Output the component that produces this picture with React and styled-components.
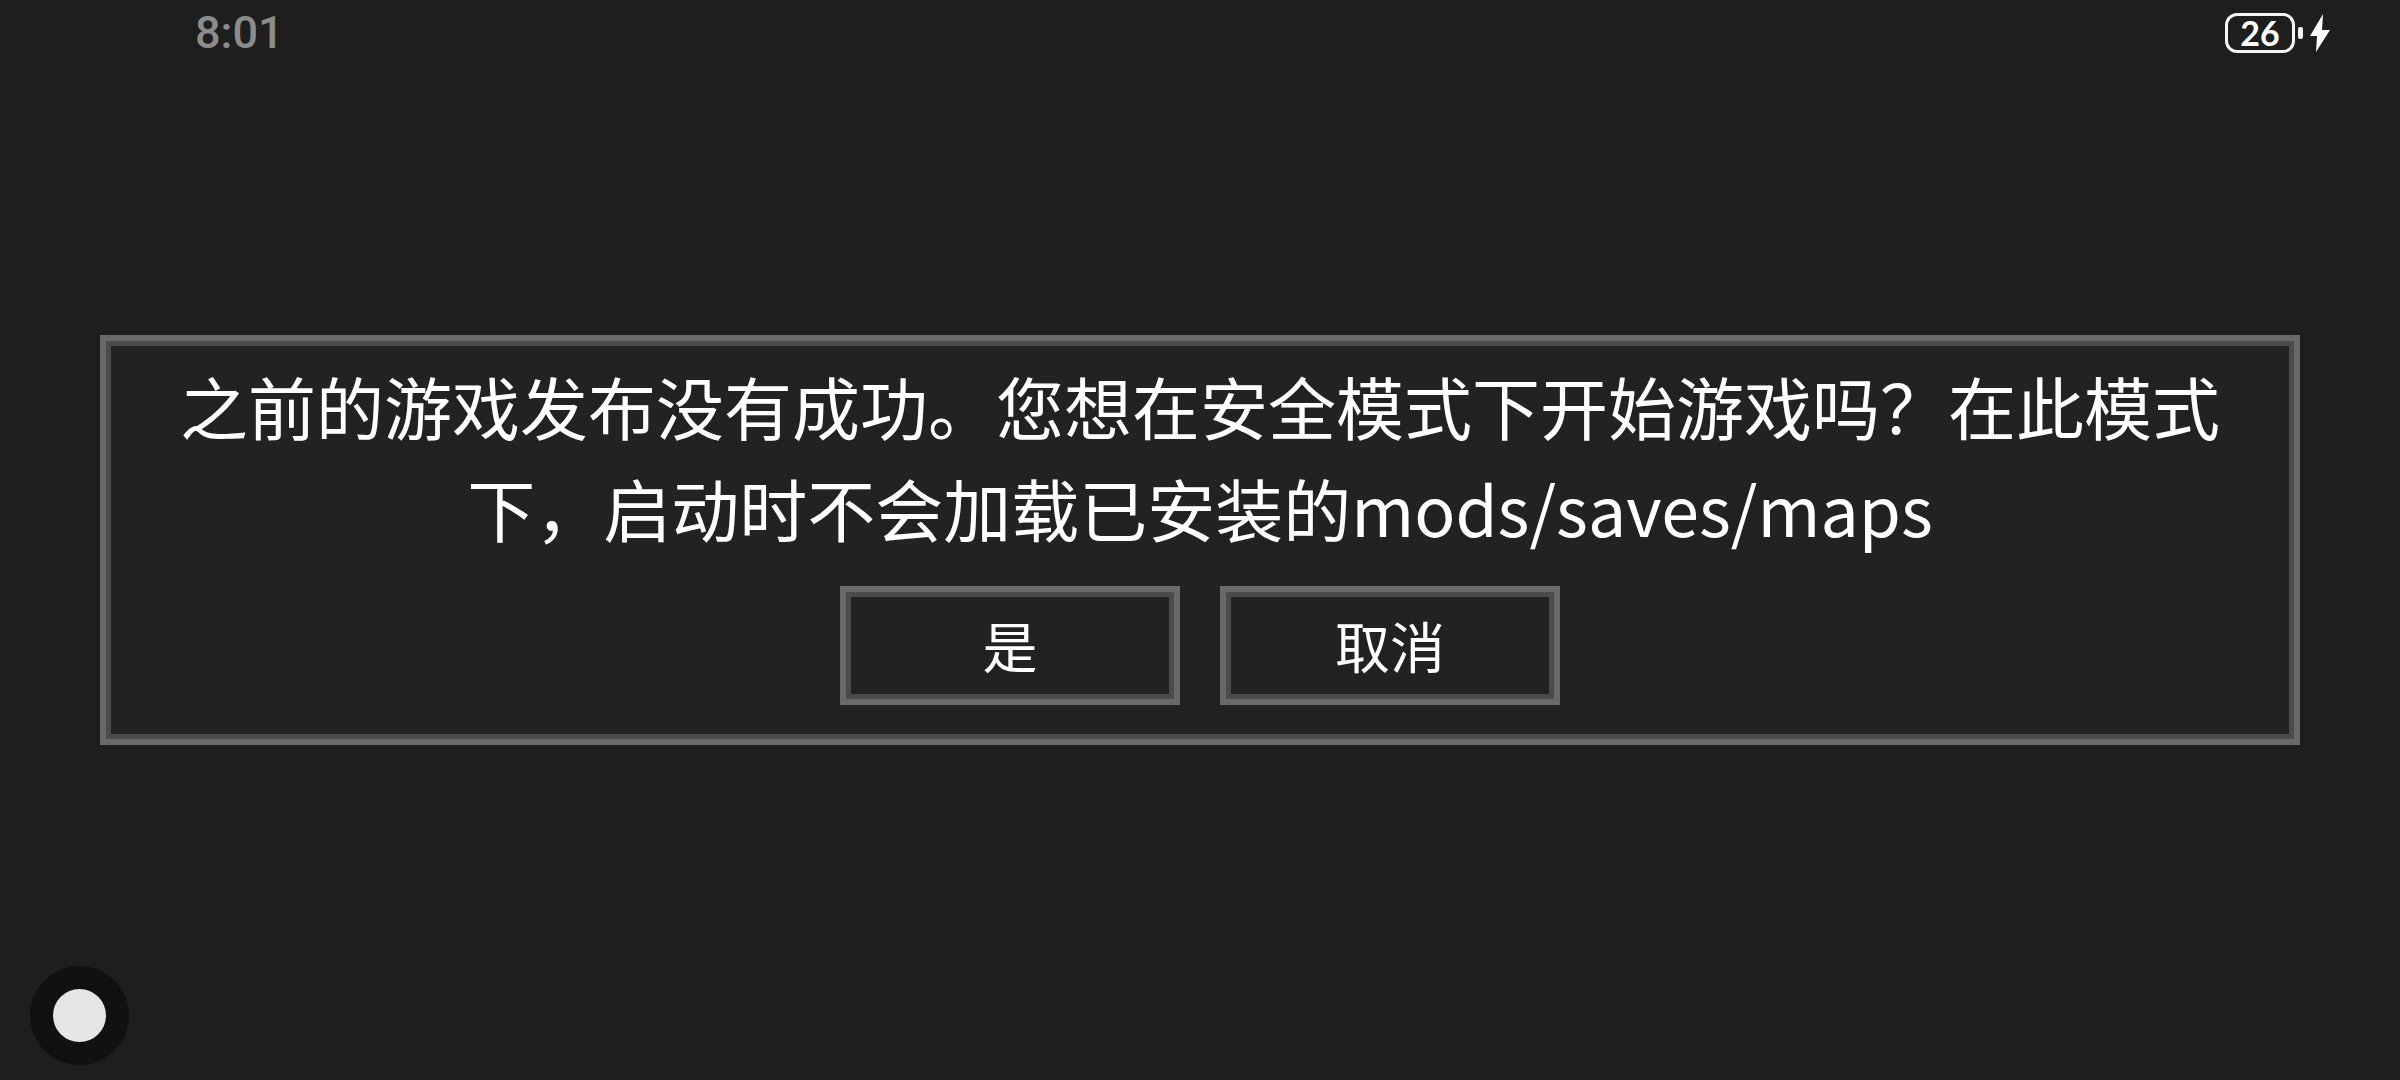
import React from "react";
import styled, { createGlobalStyle } from "styled-components";

const GlobalStyle = createGlobalStyle`
  * { box-sizing: border-box; }
  body {
    margin: 0;
    background: #1e1e1e;
    color: #fff;
    font-family: "Noto Sans CJK SC", sans-serif;
  }
`;

const Screen = styled.div`
  display: grid;
  grid-template-rows: 1fr auto 1fr;
  min-height: 100vh;
`;

const StatusBar = styled.header`
  display: flex;
  align-items: center;
  justify-content: space-between;
  align-self: start;
  height: 66px;
  padding: 0 70px 0 195px;
`;

const Clock = styled.time`
  color: #8c8c8c;
  font: 500 45px/66px Roboto, sans-serif;
`;

const Power = styled.div`
  display: flex;
  align-items: center;
  gap: 3px;
`;

const BatteryLevel = styled.span`
  display: flex;
  align-items: center;
  justify-content: center;
  width: 70px;
  height: 40px;
  border: 3px solid #f4f4f4;
  border-radius: 12px;
  font: 700 34px/34px Lato, sans-serif;
`;

const BatteryTip = styled.span`
  width: 5px;
  height: 12px;
  border-radius: 2px;
  background: #f4f4f4;
`;

const Bolt = styled.svg`
  width: 20px;
  height: 38px;
  margin-left: 4px;
  fill: #fff;
`;

const Frame = `
  border: 6px solid #696969;
  outline: 5px solid #4b4b4b;
  outline-offset: -11px;
  background: #222;
`;

const Dialog = styled.main`
  ${Frame}
  margin: 0 100px;
  padding: 14px 64px 34px;
`;

const Message = styled.p`
  margin: 0 0 27px;
  font-size: 68px;
  line-height: 102px;
  text-align: center;
`;

const Actions = styled.div`
  display: flex;
  justify-content: center;
  gap: 40px;
`;

const ActionButton = styled.button`
  ${Frame}
  width: 340px;
  height: 119px;
  padding: 0 0 4px;
  color: #fff;
  font: 400 55px/80px "Noto Sans CJK SC", sans-serif;
`;

const Footer = styled.footer`
  display: flex;
  align-items: flex-end;
  padding: 0 30px 15px;
`;

const AssistButton = styled.button`
  display: grid;
  place-items: center;
  width: 99px;
  height: 99px;
  padding: 0;
  border: 0;
  border-radius: 50%;
  background: #111;
`;

const AssistDot = styled.span`
  width: 53px;
  height: 53px;
  border-radius: 50%;
  background: #e6e6e6;
`;

export default function App() {
  return (
    <>
      <GlobalStyle />
      <Screen>
        <StatusBar>
          <Clock>8:01</Clock>
          <Power>
            <BatteryLevel>26</BatteryLevel>
            <BatteryTip />
            <Bolt viewBox="0 0 20 38" aria-hidden="true">
              <path d="M13 0 L0 22 H7 L6 38 L20 16 H12 Z" />
            </Bolt>
          </Power>
        </StatusBar>
        <Dialog>
          <Message>
            之前的游戏发布没有成功。您想在安全模式下开始游戏吗？在此模式下，启动时不会加载已安装的mods/saves/maps
          </Message>
          <Actions>
            <ActionButton type="button">是</ActionButton>
            <ActionButton type="button">取消</ActionButton>
          </Actions>
        </Dialog>
        <Footer>
          <AssistButton type="button" aria-label="Assist">
            <AssistDot />
          </AssistButton>
        </Footer>
      </Screen>
    </>
  );
}
